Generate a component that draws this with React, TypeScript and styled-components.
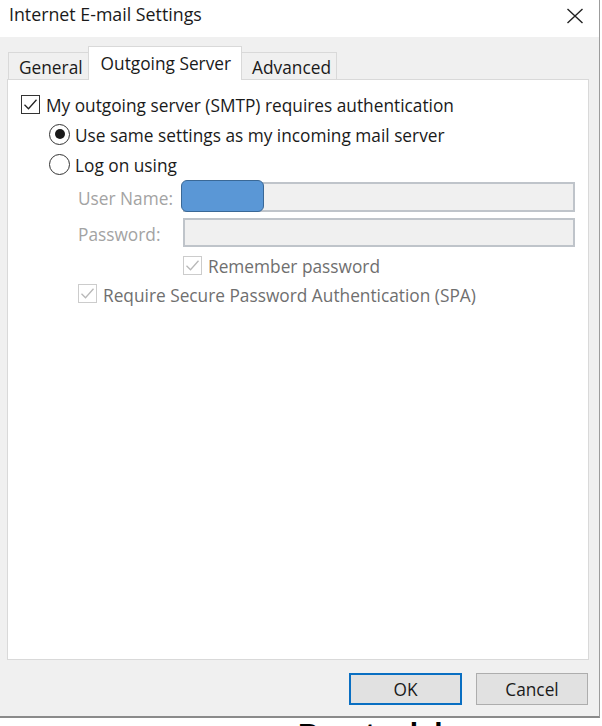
import React from "react";
import styled, { createGlobalStyle } from "styled-components";

const Global = createGlobalStyle`
  html, body { margin: 0; padding: 0; background: #ffffff; }
  body { font-family: "Open Sans", "Noto Sans", "Liberation Sans", sans-serif; }
  * { box-sizing: border-box; }
`;

const FS = "17.3px";

const Screen = styled.div`
  width: 602px;
  height: 726px;
  overflow: hidden;
  background: #ffffff;
  position: relative;
`;

const Dialog = styled.div`
  width: 600px;
  height: 718px;
  display: flex;
  flex-direction: column;
  border-right: 1px solid #9c9c9c;
  border-bottom: 2px solid #8a8a8a;
  background: #f0f0f0;
`;

const TitleBar = styled.div`
  height: 38px;
  background: #ffffff;
  display: flex;
  align-items: flex-start;
  justify-content: space-between;
  padding: 2px 14px 0 9px;
`;

const Title = styled.div`
  font-size: 17.8px;
  line-height: 24px;
  color: #1a1a1a;
`;

const CloseBtn = styled.div`
  width: 20px;
  height: 20px;
  margin-top: 4px;
  display: flex;
  align-items: center;
  justify-content: center;
`;

const Body = styled.div`
  flex: 1;
  display: flex;
  flex-direction: column;
  padding: 10px 10px 0 7px;
`;

const TabRow = styled.div`
  display: flex;
  align-items: flex-end;
  padding-left: 1px;
  height: 33px;
  position: relative;
  z-index: 1;
  margin-bottom: -1px;
`;

const Tab = styled.div<{ $active?: boolean }>`
  height: ${(p) => (p.$active ? "34px" : "28px")};
  padding: ${(p) => (p.$active ? "6px 10px 0 12px" : "4px 5px 0 10px")};
  background: ${(p) => (p.$active ? "#ffffff" : "#f0f0f0")};
  border: 1px solid #d9d9d9;
  border-bottom: ${(p) => (p.$active ? "none" : "1px solid #d9d9d9")};
  margin-left: ${(p) => (p.$active ? "-1px" : "0")};
  margin-right: ${(p) => (p.$active ? "-1px" : "0")};
  font-size: ${FS};
  line-height: 22px;
  color: #1a1a1a;
  position: relative;
  z-index: ${(p) => (p.$active ? 2 : 1)};
  white-space: nowrap;
`;

const Panel = styled.div`
  height: 581px;
  background: #ffffff;
  border: 1px solid #d9d9d9;
  padding: 9px 0 0 13px;
  display: flex;
  flex-direction: column;
`;

const Row = styled.div<{ $indent?: number; $h?: number; $top?: number }>`
  display: flex;
  align-items: center;
  height: ${(p) => p.$h ?? 30}px;
  margin-left: ${(p) => p.$indent ?? 0}px;
  margin-top: ${(p) => p.$top ?? 0}px;
`;

const Label = styled.span<{ $dim?: boolean }>`
  font-size: ${FS};
  line-height: 22px;
  padding-top: 4px;
  color: ${(p) => (p.$dim ? "#6f6f6f" : "#1a1a1a")};
  white-space: nowrap;
`;

const Box = styled.span<{ $disabled?: boolean }>`
  width: 19px;
  height: 19px;
  border: 1px solid ${(p) => (p.$disabled ? "#cccccc" : "#333333")};
  background: #ffffff;
  display: inline-flex;
  align-items: center;
  justify-content: center;
  margin-right: 6px;
  flex: none;
`;

const Radio = styled.span<{ $checked?: boolean }>`
  width: 21px;
  height: 21px;
  border: 1.5px solid #333333;
  border-radius: 50%;
  background: #ffffff;
  display: inline-flex;
  align-items: center;
  justify-content: center;
  margin-right: 5px;
  flex: none;
  &::after {
    content: "";
    width: 10px;
    height: 10px;
    border-radius: 50%;
    background: #1a1a1a;
    display: ${(p) => (p.$checked ? "block" : "none")};
  }
`;

const FieldLabel = styled.span`
  width: 105px;
  font-size: ${FS};
  line-height: 22px;
  padding-top: 4px;
  color: #a3a3a3;
  flex: none;
`;

const FieldWrap = styled.div`
  position: relative;
  width: 392px;
`;

const Field = styled.div<{ $h: number }>`
  height: ${(p) => p.$h}px;
  background: #f0f0f0;
  border: 2px solid #bfc4ca;
`;

const Redact = styled.div`
  position: absolute;
  left: -2px;
  top: -2px;
  width: 83px;
  height: 32px;
  border-radius: 6px;
  background: #5a97d6;
  border: 1px solid #3a6896;
`;

const Footer = styled.div`
  height: 56px;
  display: flex;
  justify-content: flex-end;
  align-items: flex-start;
  gap: 14px;
  padding-top: 13px;
  padding-right: 1px;
`;

const Button = styled.div<{ $default?: boolean }>`
  width: ${(p) => (p.$default ? 113 : 112)}px;
  height: 32px;
  background: #e1e1e1;
  border: ${(p) => (p.$default ? "2px solid #0a6fc2" : "1px solid #adadad")};
  display: flex;
  align-items: center;
  justify-content: center;
  padding-top: 2px;
  font-size: ${FS};
  line-height: 22px;
  color: #1a1a1a;
`;

const Below = styled.div`
  height: 8px;
  overflow: hidden;
  padding-left: 298px;
`;

const BelowText = styled.div`
  font-family: "Liberation Sans", Arial, sans-serif;
  font-weight: 700;
  font-size: 30px;
  line-height: 30px;
  margin-top: 1px;
  color: #000000;
  letter-spacing: 4px;
  white-space: nowrap;
`;

const Check = ({ color }: { color: string }) => (
  <svg width="15" height="15" viewBox="0 0 15 15">
    <path d="M1.5 7.8 L5.5 11.8 L13.5 2.8" fill="none" stroke={color} strokeWidth="1.3" />
  </svg>
);

export default function App() {
  return (
    <Screen>
      <Global />
      <Dialog>
        <TitleBar>
          <Title>Internet E-mail Settings</Title>
          <CloseBtn>
            <svg width="18" height="16" viewBox="0 0 18 16">
              <path d="M1.5 1 L16.5 15 M16.5 1 L1.5 15" stroke="#222" strokeWidth="1.4" />
            </svg>
          </CloseBtn>
        </TitleBar>
        <Body>
          <TabRow>
            <Tab>General</Tab>
            <Tab $active>Outgoing Server</Tab>
            <Tab>Advanced</Tab>
          </TabRow>
          <Panel>
            <Row>
              <Box>
                <Check color="#222" />
              </Box>
              <Label>My outgoing server (SMTP) requires authentication</Label>
            </Row>
            <Row $indent={28}>
              <Radio $checked />
              <Label>Use same settings as my incoming mail server</Label>
            </Row>
            <Row $indent={28}>
              <Radio />
              <Label>Log on using</Label>
            </Row>
            <Row $indent={57} $h={30} $top={3}>
              <FieldLabel>User Name:</FieldLabel>
              <FieldWrap>
                <Field $h={30} />
                <Redact />
              </FieldWrap>
            </Row>
            <Row $indent={57} $h={29} $top={6}>
              <FieldLabel>Password:</FieldLabel>
              <FieldWrap>
                <Field $h={29} />
              </FieldWrap>
            </Row>
            <Row $indent={162} $h={28} $top={4}>
              <Box $disabled>
                <Check color="#b8b8b8" />
              </Box>
              <Label $dim>Remember password</Label>
            </Row>
            <Row $indent={57} $h={29}>
              <Box $disabled>
                <Check color="#b8b8b8" />
              </Box>
              <Label $dim>Require Secure Password Authentication (SPA)</Label>
            </Row>
          </Panel>
          <Footer>
            <Button $default>OK</Button>
            <Button>Cancel</Button>
          </Footer>
        </Body>
      </Dialog>
      <Below>
        <BelowText>Posted by</BelowText>
      </Below>
    </Screen>
  );
}
